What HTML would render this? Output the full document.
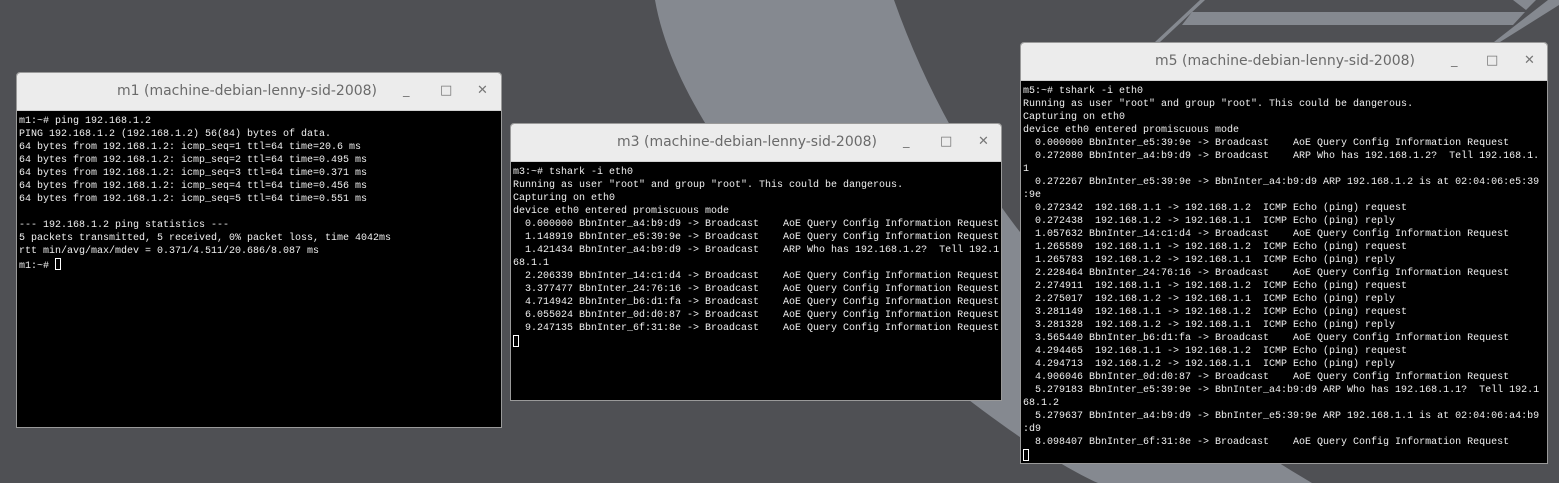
<!DOCTYPE html>
<html><head><meta charset="utf-8"><style>
*{margin:0;padding:0;box-sizing:border-box}
body{width:1559px;height:483px;overflow:hidden;background:#4f5054;position:relative;font-family:"Liberation Sans",sans-serif}
.bg{position:absolute;left:0;top:0}
.win{position:absolute;background:#000;border:1px solid #9a9a9a;border-radius:4px 4px 0 0;overflow:hidden}
.tb{height:38px;background:#ececec;border-bottom:1px solid #d0d0d0;position:relative;color:#6a6a6a;font-size:14px;font-family:"DejaVu Sans",sans-serif}
.tb .t{position:absolute;top:10px;white-space:nowrap}
.tb .b{position:absolute;top:10px;font-size:13px;color:#777}
pre{font-family:"Liberation Mono",monospace;font-size:10px;line-height:13px;color:#f0f0f0;padding:4px 0 0 2px;white-space:pre}
.cur{display:inline-block;width:6px;height:12px;border:1px solid #fff;vertical-align:-2px}
</style></head><body>
<svg class="bg" width="1559" height="483">
<path d="M655,0 C690,200 1000,440 1098,483 L1312,483 Q1000,300 894,0 Z" fill="#858990"/>
<path d="M1192,12 L1525,12 L1513,25 L1182,25 Z" fill="#858990"/>
<path d="M1200,0 L1205,0 L1160,42 L1155,42 Z" fill="#858990"/>
<path d="M1548,0 L1559,0 L1559,5 L1500,42 L1494,42 Z" fill="#858990"/>
<path d="M1513,0 L1536,0 L1526,10 Z" fill="#858990"/>
</svg>

<div class="win" style="left:16px;top:72px;width:486px;height:356px">
<div class="tb"><span class="t" style="left:100px">m1 (machine-debian-lenny-sid-2008)</span><span class="b" style="left:386px">_</span><span class="b" style="left:423px">□</span><span class="b" style="left:460px">✕</span></div>
<pre>m1:~# ping 192.168.1.2
PING 192.168.1.2 (192.168.1.2) 56(84) bytes of data.
64 bytes from 192.168.1.2: icmp_seq=1 ttl=64 time=20.6 ms
64 bytes from 192.168.1.2: icmp_seq=2 ttl=64 time=0.495 ms
64 bytes from 192.168.1.2: icmp_seq=3 ttl=64 time=0.371 ms
64 bytes from 192.168.1.2: icmp_seq=4 ttl=64 time=0.456 ms
64 bytes from 192.168.1.2: icmp_seq=5 ttl=64 time=0.551 ms

--- 192.168.1.2 ping statistics ---
5 packets transmitted, 5 received, 0% packet loss, time 4042ms
rtt min/avg/max/mdev = 0.371/4.511/20.686/8.087 ms
m1:~# <span class="cur"></span></pre>
</div>

<div class="win" style="left:510px;top:123px;width:492px;height:278px">
<div class="tb"><span class="t" style="left:106px">m3 (machine-debian-lenny-sid-2008)</span><span class="b" style="left:392px">_</span><span class="b" style="left:429px">□</span><span class="b" style="left:467px">✕</span></div>
<pre>m3:~# tshark -i eth0
Running as user "root" and group "root". This could be dangerous.
Capturing on eth0
device eth0 entered promiscuous mode
  0.000000 BbnInter_a4:b9:d9 -> Broadcast    AoE Query Config Information Request
  1.148919 BbnInter_e5:39:9e -> Broadcast    AoE Query Config Information Request
  1.421434 BbnInter_a4:b9:d9 -> Broadcast    ARP Who has 192.168.1.2?  Tell 192.1
68.1.1
  2.206339 BbnInter_14:c1:d4 -> Broadcast    AoE Query Config Information Request
  3.377477 BbnInter_24:76:16 -> Broadcast    AoE Query Config Information Request
  4.714942 BbnInter_b6:d1:fa -> Broadcast    AoE Query Config Information Request
  6.055024 BbnInter_0d:d0:87 -> Broadcast    AoE Query Config Information Request
  9.247135 BbnInter_6f:31:8e -> Broadcast    AoE Query Config Information Request
<span class="cur"></span></pre>
</div>

<div class="win" style="left:1020px;top:42px;width:528px;height:422px">
<div class="tb"><span class="t" style="left:134px">m5 (machine-debian-lenny-sid-2008)</span><span class="b" style="left:430px">_</span><span class="b" style="left:465px">□</span><span class="b" style="left:503px">✕</span></div>
<pre>m5:~# tshark -i eth0
Running as user "root" and group "root". This could be dangerous.
Capturing on eth0
device eth0 entered promiscuous mode
  0.000000 BbnInter_e5:39:9e -> Broadcast    AoE Query Config Information Request
  0.272080 BbnInter_a4:b9:d9 -> Broadcast    ARP Who has 192.168.1.2?  Tell 192.168.1.
1
  0.272267 BbnInter_e5:39:9e -> BbnInter_a4:b9:d9 ARP 192.168.1.2 is at 02:04:06:e5:39
:9e
  0.272342  192.168.1.1 -> 192.168.1.2  ICMP Echo (ping) request
  0.272438  192.168.1.2 -> 192.168.1.1  ICMP Echo (ping) reply
  1.057632 BbnInter_14:c1:d4 -> Broadcast    AoE Query Config Information Request
  1.265589  192.168.1.1 -> 192.168.1.2  ICMP Echo (ping) request
  1.265783  192.168.1.2 -> 192.168.1.1  ICMP Echo (ping) reply
  2.228464 BbnInter_24:76:16 -> Broadcast    AoE Query Config Information Request
  2.274911  192.168.1.1 -> 192.168.1.2  ICMP Echo (ping) request
  2.275017  192.168.1.2 -> 192.168.1.1  ICMP Echo (ping) reply
  3.281149  192.168.1.1 -> 192.168.1.2  ICMP Echo (ping) request
  3.281328  192.168.1.2 -> 192.168.1.1  ICMP Echo (ping) reply
  3.565440 BbnInter_b6:d1:fa -> Broadcast    AoE Query Config Information Request
  4.294465  192.168.1.1 -> 192.168.1.2  ICMP Echo (ping) request
  4.294713  192.168.1.2 -> 192.168.1.1  ICMP Echo (ping) reply
  4.906046 BbnInter_0d:d0:87 -> Broadcast    AoE Query Config Information Request
  5.279183 BbnInter_e5:39:9e -> BbnInter_a4:b9:d9 ARP Who has 192.168.1.1?  Tell 192.1
68.1.2
  5.279637 BbnInter_a4:b9:d9 -> BbnInter_e5:39:9e ARP 192.168.1.1 is at 02:04:06:a4:b9
:d9
  8.098407 BbnInter_6f:31:8e -> Broadcast    AoE Query Config Information Request
<span class="cur"></span></pre>
</div>
</body></html>
